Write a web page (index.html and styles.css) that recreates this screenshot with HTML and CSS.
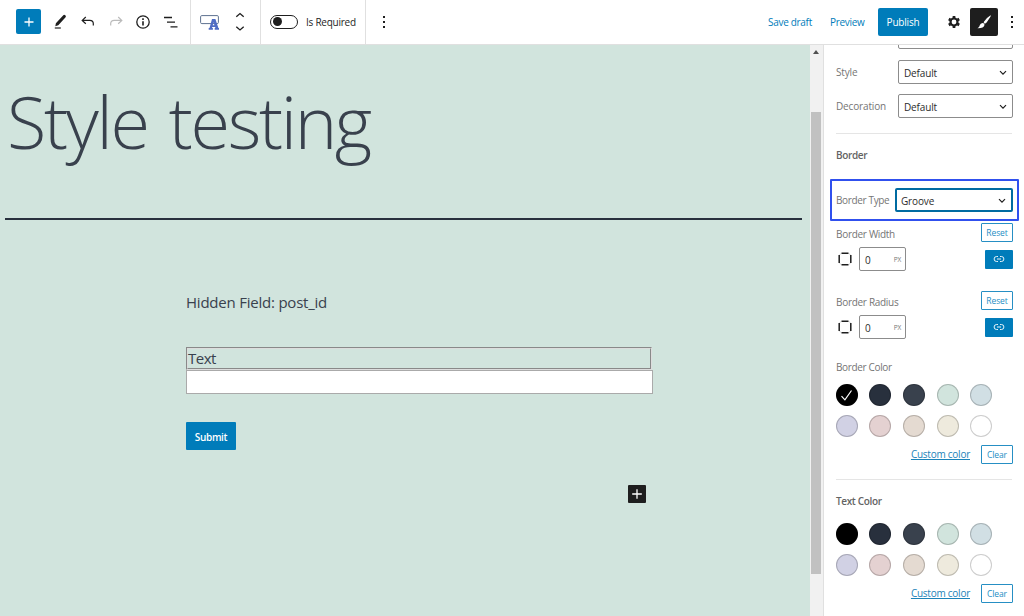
FILE: index.html
```
<!DOCTYPE html>
<html lang="en">
<head>
<meta charset="utf-8">
<title>Style testing</title>
<link rel="stylesheet" href="styles.css">
</head>
<body>
<header class="topbar">
  <div class="tools">
    <button class="add"><svg width="24" height="24" viewBox="0 0 24 24"><path d="M12 7.500v9M7.500 12h9" stroke="#fff" stroke-width="1.300"/></svg></button>
    <svg class="icon pencil" width="14" height="16" viewBox="0 0 14 16"><path d="M1.300 12.200l.6-3L9.300 1.200q.9-.8 2 .1t.3 2L4.300 11.200z" fill="#1e1e1e"/><path d="M.8 14h6" stroke="#1e1e1e" stroke-width="1.200"/></svg>
    <svg class="icon undo" width="14" height="12" viewBox="0 0 14 12"><path d="M4.800 1L1.200 4.400l3.600 3.400M1.400 4.400h7.400q3.500 0 3.500 3.200v1.900" fill="none" stroke="#1e1e1e" stroke-width="1.200"/></svg>
    <svg class="icon redo" width="14" height="12" viewBox="0 0 14 12"><path d="M9.200 1l3.600 3.400-3.600 3.400M12.600 4.400H5.200Q1.700 4.400 1.700 7.600v1.900" fill="none" stroke="#bbb" stroke-width="1.200"/></svg>
    <svg class="icon info" width="16" height="16" viewBox="0 0 16 16"><circle cx="8" cy="8" r="6.200" fill="none" stroke="#1e1e1e" stroke-width="1.300"/><path d="M8 7.200v4.200M8 4.300v1.600" stroke="#1e1e1e" stroke-width="1.600"/></svg>
    <svg class="icon list" width="16" height="14" viewBox="0 0 16 14"><path d="M1 2.500h8M4 7.200h8M7.500 11.800h7" stroke="#1e1e1e" stroke-width="1.300"/></svg>
  </div>
  <div class="block-tools">
    <svg class="field-icon" width="20" height="17" viewBox="0 0 20 17"><rect x=".6" y="1.600" width="17.800" height="8" rx="1.200" fill="#fff" stroke="#5d7190"/><path d="M12 5h3.400l3 9h.6v1.800h-4.300V14h.7l-.3-1h-2.800l-.3 1h.9v1.800H8.700V14h.8zM12.700 11.200h1.700l-.8-3z" fill="#4f6cc4" fill-rule="evenodd"/></svg>
    <svg class="mover" width="10" height="20" viewBox="0 0 10 20"><path d="M1.300 4.800L5 1.600l3.700 3.200M1.300 14.700L5 17.900l3.700-3.200" fill="none" stroke="#1e1e1e" stroke-width="1.300"/></svg>
  </div>
  <div class="required"><span class="toggle"><i></i></span><span class="required-label">Is Required</span></div>
  <div class="more-wrap"><span class="dots"><i></i><i></i><i></i></span></div>
  <div class="actions">
    <a class="save">Save draft</a><a class="preview">Preview</a><button class="publish">Publish</button>
    <svg class="gear" width="14" height="14" viewBox="0 0 14 14"><circle cx="7" cy="7" r="3.500" fill="none" stroke="#1e1e1e" stroke-width="2.200"/><path d="M7 1v2M7 11v2M1.800 4l1.700 1M10.500 9l1.700 1M12.200 4l-1.700 1M3.500 9l-1.700 1" stroke="#1e1e1e" stroke-width="2.700"/></svg>
    <button class="styles"><svg width="28" height="28" viewBox="0 0 28 28"><path d="M20.600 7.300q.6.200-.3 1.600l-3.700 5.700q-1 1.300-2 .9-1.300-.5-.7-1.700 3.200-4.500 6.700-6.500zM12.500 14.900q2.200.2 2 2-.8 3.500-7 3.300 2-1.100 2.300-3 .6-2.100 2.700-2.300z" fill="#fff"/></svg></button>
    <span class="dots"><i></i><i></i><i></i></span>
  </div>
</header>
<div class="workspace">
  <main class="canvas">
    <h1>Style testing</h1>
    <hr class="title-rule">
    <section class="form">
      <p class="hidden-field">Hidden Field: post_id</p>
      <label class="field-label">Text</label>
      <input class="field" type="text" aria-label="Text">
      <button class="submit">Submit</button>
      <button class="insert"><svg width="18" height="18" viewBox="0 0 18 18"><path d="M9 4.200v9.600M4.200 9h9.600" stroke="#fff" stroke-width="1.300"/></svg></button>
    </section>
  </main>
  <div class="scrollbar"><span class="arrow"></span><span class="thumb"></span></div>
  <aside class="panel">
    <div class="row clipped"><span class="select"></span></div>
    <div class="row style-row"><span>Style</span><span class="select">Default<svg width="8" height="6" viewBox="0 0 8 6"><path d="M1 1.200l3 3 3-3" fill="none" stroke="#1e1e1e" stroke-width="1.200"/></svg></span></div>
    <div class="row decoration-row"><span>Decoration</span><span class="select">Default<svg width="8" height="6" viewBox="0 0 8 6"><path d="M1 1.200l3 3 3-3" fill="none" stroke="#1e1e1e" stroke-width="1.200"/></svg></span></div>
    <hr class="divider">
    <h2>Border</h2>
    <div class="highlight"><span class="type-label">Border Type</span><span class="select focused">Groove<svg width="8" height="6" viewBox="0 0 8 6"><path d="M1 1.200l3 3 3-3" fill="none" stroke="#1e1e1e" stroke-width="1.200"/></svg></span></div>
    <div class="row dim-head"><span>Border Width</span><button class="outline">Reset</button></div>
    <div class="dim">
      <svg width="14" height="14" viewBox="0 0 14 14"><path d="M3.500 1.200h7M3.500 12.800h7M1.200 3v8M12.800 3v8" stroke="#1e1e1e" stroke-width="1.500"/><path d="M2 2.500l1-1M12 2.500l-1-1M2 11.500l1 1M12 11.500l-1 1" stroke="#777" stroke-width=".6"/></svg>
      <span class="number">0<small>PX</small></span>
      <button class="link"><svg width="12" height="8" viewBox="0 0 12 8"><path d="M5 1.500H3.600a2.500 2.500 0 000 5H5M7 1.500h1.400a2.500 2.500 0 010 5H7M4 4h4" fill="none" stroke="#fff" stroke-width=".9"/></svg></button>
    </div>
    <div class="row dim-head radius"><span>Border Radius</span><button class="outline">Reset</button></div>
    <div class="dim">
      <svg width="14" height="14" viewBox="0 0 14 14"><path d="M3.500 1.200h7M3.500 12.800h7M1.200 3v8M12.800 3v8" stroke="#1e1e1e" stroke-width="1.500"/><path d="M2 2.500l1-1M12 2.500l-1-1M2 11.500l1 1M12 11.500l-1 1" stroke="#777" stroke-width=".6"/></svg>
      <span class="number">0<small>PX</small></span>
      <button class="link"><svg width="12" height="8" viewBox="0 0 12 8"><path d="M5 1.500H3.600a2.500 2.500 0 000 5H5M7 1.500h1.400a2.500 2.500 0 010 5H7M4 4h4" fill="none" stroke="#fff" stroke-width=".9"/></svg></button>
    </div>
    <div class="color-label">Border Color</div>
    <div class="swatches">
      <i class="black"><svg width="22" height="22" viewBox="0 0 22 22"><path d="M5.500 12.200l3.400 3.600 6.600-9.300" fill="none" stroke="#fff" stroke-width="1.200"/></svg></i><i class="navy"></i><i class="slate"></i><i class="green"></i><i class="blue"></i>
      <i class="purple"></i><i class="red"></i><i class="orange"></i><i class="yellow"></i><i class="white"></i>
    </div>
    <div class="color-foot"><a>Custom color</a><button class="outline">Clear</button></div>
    <hr class="divider">
    <h2 class="text-heading">Text Color</h2>
    <div class="swatches text-swatches">
      <i class="black"></i><i class="navy"></i><i class="slate"></i><i class="green"></i><i class="blue"></i>
      <i class="purple"></i><i class="red"></i><i class="orange"></i><i class="yellow"></i><i class="white"></i>
    </div>
    <div class="color-foot"><a>Custom color</a><button class="outline">Clear</button></div>
  </aside>
</div>
</body>
</html>
```
FILE: styles.css
```
* { box-sizing: border-box; }
body { margin: 0; width: 1024px; height: 616px; overflow: hidden; background: #fff; font: 10px/14px "Open Sans", "Noto Sans", sans-serif; color: #1e1e1e; }
button { border: 0; padding: 0; margin: 0; font: inherit; display: flex; align-items: center; justify-content: center; }
svg { display: block; flex: none; }
p, h1, h2, hr { margin: 0; border: 0; }

.topbar { display: flex; height: 45px; border-bottom: 1px solid #e0e0e0; }
.tools { display: flex; align-items: center; width: 191px; padding: 0 0 1px 16px; border-right: 1px solid #e0e0e0; }
.add { width: 25px; height: 25px; border-radius: 2px; background: #007cba; }
.pencil { margin-left: 13px; }
.undo { margin-left: 13px; }
.redo { margin-left: 14px; }
.info { margin-left: 12px; }
.list { margin-left: 12px; }
.block-tools { display: flex; align-items: center; width: 70px; padding: 0 0 2px 9px; border-right: 1px solid #e0e0e0; }
.field-icon { margin-top: 3px; }
.mover { margin: 1px 0 0 15px; }
.required { display: flex; align-items: center; width: 105px; padding: 0 0 1px 9px; border-right: 1px solid #e0e0e0; }
.toggle { width: 28px; height: 14px; border: 1px solid #1e1e1e; border-radius: 7px; padding: 1.500px; }
.toggle i { display: block; width: 9px; height: 9px; border-radius: 50%; background: #1e1e1e; }
.required-label { margin: 1px 0 0 8px; white-space: nowrap; letter-spacing: -.25px; }
.more-wrap { display: flex; align-items: center; padding: 0 0 1px 17px; }
.dots { display: flex; flex-direction: column; gap: 3px; }
.dots i { width: 2px; height: 2px; background: #1e1e1e; }
.actions { display: flex; align-items: center; margin-left: auto; padding: 0 11px 1px 0; color: #007cba; }
.save { width: 62px; letter-spacing: -.3px; }
.preview { width: 48px; letter-spacing: -.3px; }
.save, .preview { padding-top: 1px; white-space: nowrap; }
.publish { width: 50px; height: 28px; background: #007cba; border-radius: 2px; color: #fff; padding-top: 1px; letter-spacing: -.2px; }
.gear { margin-left: 19px; }
.styles { width: 28px; height: 28px; margin-left: 9px; border-radius: 2px; background: #1e1e1e; }
.actions .dots { margin-left: 13px; }

.workspace { display: flex; height: 571px; }
.canvas { width: 810px; background: #d1e4dd; color: #39414d; padding: 33px 8px 0 5px; }
h1 { height: 140px; padding-left: 2px; font-size: 72px; line-height: 86px; font-weight: 300; letter-spacing: -2.300px; word-spacing: 4.500px; white-space: nowrap; }
.title-rule { height: 2px; background: #28303d; }
.form { display: flex; flex-direction: column; width: 467px; margin: 71px 0 0 181px; }
.hidden-field { font-size: 15px; line-height: 23px; letter-spacing: -.22px; }
.field-label { width: 466px; height: 23px; margin-top: 33px; border: 2px groove #ddd; font-size: 15px; line-height: 18px; letter-spacing: -.5px; }
.field { width: 467px; height: 24px; border: 1px solid #aaa; background: #fff; padding: 0; }
.submit { width: 50px; height: 28px; margin-top: 28px; border-radius: 1px; background: #007cba; color: #fff; font-weight: 600; padding-top: 2px; letter-spacing: -.35px; }
.insert { align-self: flex-end; width: 18px; height: 18px; margin: 35px 7px 0 0; border-radius: 1px; background: #1e1e1e; }

.scrollbar { width: 14px; padding: 5px 2px 0 1px; background: #f1f1f1; border-right: 1px solid #e0e0e0; }
.arrow { display: block; width: 6px; margin-left: 2px; border: 3px solid transparent; border-top-width: 0; border-bottom: 4px solid #505050; }
.thumb { display: block; width: 10px; height: 462px; margin-top: 58px; background: #c1c1c1; }

.panel { width: 200px; padding: 0 11px 0 12px; color: #757575; letter-spacing: -.15px; }
.row { display: flex; align-items: center; justify-content: space-between; }
.clipped { height: 4px; overflow: hidden; align-items: flex-end; justify-content: flex-end; }
.style-row { height: 24px; margin-top: 11px; }
.decoration-row { height: 24px; margin-top: 10px; }
.select { display: flex; align-items: center; justify-content: space-between; flex: none; width: 115px; height: 24px; padding: 1px 5px 0; border: 1px solid #8c8c8c; border-radius: 2px; color: #2c2c2c; background: #fff; }
.divider { height: 1px; margin: 15px 1px 0 0; background: #e5e5e5; }
h2 { margin-top: 11px; font-size: 10px; line-height: 21px; height: 20px; font-weight: 600; color: #636363; letter-spacing: -.35px; }
.highlight { display: flex; align-items: center; justify-content: space-between; height: 42px; margin: 14px -6px 0 -6px; padding: 0 4px 0 4px; border: 2px solid #3050ee; border-radius: 1px; }
.type-label { white-space: nowrap; letter-spacing: -.35px; }
.focused { width: 118px; border: 2px solid #006ba1; padding: 1px 5px 0 4px; }
.dim-head { height: 19px; margin-top: 2px; }
.row.dim-head > span:first-child { padding-top: 3px; letter-spacing: -.3px; }
.row.radius { margin-top: 20px; }
.outline { width: 32px; height: 19px; border: 1px solid #268fc4; border-radius: 1px; background: #fff; color: #248ec4; font-size: 8.500px; line-height: 12px; letter-spacing: -.1px; }
.dim { display: flex; align-items: center; height: 24px; margin-top: 5px; padding-left: 2px; }
.number { display: flex; align-items: center; justify-content: space-between; width: 47px; height: 24px; margin-left: 7px; padding: 1px 4px 0 5px; border: 1px solid #8c8c8c; border-radius: 2px; color: #2c2c2c; }
.number small { font-size: 6.500px; color: #757575; }
.link { width: 28px; height: 19px; margin: 0 0 0 auto; border-radius: 1px; background: #007cba; }
.color-label { height: 20px; margin-top: 18px; line-height: 21px; letter-spacing: -.35px; }
.swatches { display: grid; grid-template-columns: repeat(5, 22px); column-gap: 11.700px; row-gap: 9px; margin: 7px 0 0 -.5px; }
.swatches i { width: 22px; height: 22px; border-radius: 50%; box-shadow: inset 0 0 0 1px rgba(0,0,0,.2); }
.text-swatches { margin-top: 12px; }
.black { background: #000; }
.navy { background: #28303d; }
.slate { background: #39414d; }
.green { background: #d1e4dd; }
.blue { background: #d1dfe4; }
.purple { background: #d1d1e4; }
.red { background: #e4d1d1; }
.orange { background: #e4dad1; }
.yellow { background: #eeeadd; }
.white { background: #fff; }
.color-foot { display: flex; align-items: center; justify-content: flex-end; gap: 11px; height: 19px; margin-top: 8px; }
.color-foot a { padding-bottom: 1px; color: #1b83b9; text-decoration: underline; white-space: nowrap; letter-spacing: -.25px; }
```
